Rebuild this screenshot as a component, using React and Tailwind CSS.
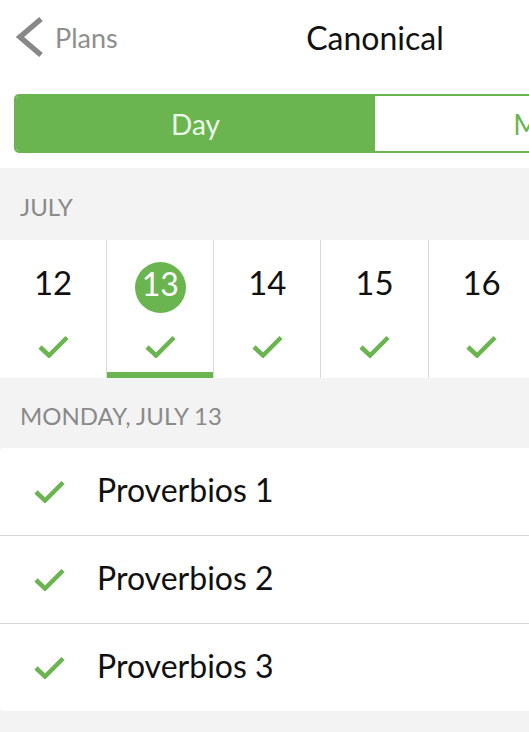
import React from "react";

const GREEN = "#6ab54f";

function Check({ className = "" }) {
  return (
    <svg width="31" height="23" viewBox="0 0 31 23" className={className}>
      <polyline
        points="2,12 11,20.5 29,2.5"
        fill="none"
        stroke={GREEN}
        strokeWidth="4.5"
        strokeLinecap="butt"
        strokeLinejoin="miter"
      />
    </svg>
  );
}

const days = [12, 13, 14, 15, 16, 17, 18];
const readings = ["Proverbios 1", "Proverbios 2", "Proverbios 3"];

export default function App() {
  return (
    <div className="w-[529px] h-[732px] overflow-hidden bg-[#f3f3f3] font-['Lato',sans-serif]">
      <div className="w-[750px]">
        {/* Top bar */}
        <header className="bg-white pb-[15px]">
          <div className="relative flex h-[76px] items-center justify-center">
            <div className="absolute left-[15px] top-[16px] flex items-center">
              <svg width="28" height="42" viewBox="0 0 28 42">
                <polyline
                  points="26,3 5,21 26,39"
                  fill="none"
                  stroke="#888888"
                  strokeWidth="5.5"
                  strokeLinejoin="miter"
                />
              </svg>
              <span className="ml-[12px] text-[27px] leading-none text-[#8e8e8e]">Plans</span>
            </div>
            <h1 className="text-[32px] leading-none text-[#111]">Canonical</h1>
          </div>

          {/* Segmented control */}
          <div className="mx-[14px] mt-[18px] flex h-[59px] overflow-hidden rounded-[5px] border-2 border-[#6ab54f]">
            <div className="flex flex-1 items-center justify-center bg-[#6ab54f] text-[28px] leading-none text-[#eef8ea]">
              Day
            </div>
            <div className="flex flex-1 items-center justify-center bg-white text-[28px] leading-none text-[#6ab54f]">
              Month
            </div>
          </div>
        </header>

        {/* Month label */}
        <div className="px-5 pt-[27px] pb-[21px] text-[24px] leading-[24px] text-[#8a8a8a]">JULY</div>

        {/* Day strip */}
        <div className="grid h-[138px] grid-cols-7 divide-x divide-[#d9d9d9] bg-white">
          {days.map((d) => {
            const active = d === 13;
            return (
              <div key={d} className="flex flex-col items-center pt-[22px]">
                <div
                  className={
                    active
                      ? "flex h-[51px] w-[51px] items-center justify-center rounded-full bg-[#6ab54f] pb-[8px] text-[32px] leading-none text-white"
                      : "flex h-[51px] w-[51px] items-center justify-center pb-[10px] text-[33px] leading-none text-[#111]"
                  }
                >
                  {d}
                </div>
                <Check className="mt-[22px]" />
                <div className={active ? "mt-auto h-[6px] w-full bg-[#6ab54f]" : "mt-auto h-[6px] w-full"} />
              </div>
            );
          })}
        </div>

        {/* Day label */}
        <div className="px-5 pt-[26px] pb-[20px] text-[24px] leading-[24px] text-[#8a8a8a]">MONDAY, JULY 13</div>

        {/* Readings */}
        <div className="overflow-hidden rounded-[4px] bg-white">
          {readings.map((r, i) => (
            <div
              key={r}
              className={
                i < readings.length - 1
                  ? "flex h-[88px] items-center border-b border-[#d6d6d6] pl-[34px]"
                  : "flex h-[87px] items-center pl-[34px]"
              }
            >
              <Check />
              <span className="ml-[32px] pb-[4px] text-[32px] leading-none text-[#111]">{r}</span>
            </div>
          ))}
        </div>
      </div>
    </div>
  );
}
